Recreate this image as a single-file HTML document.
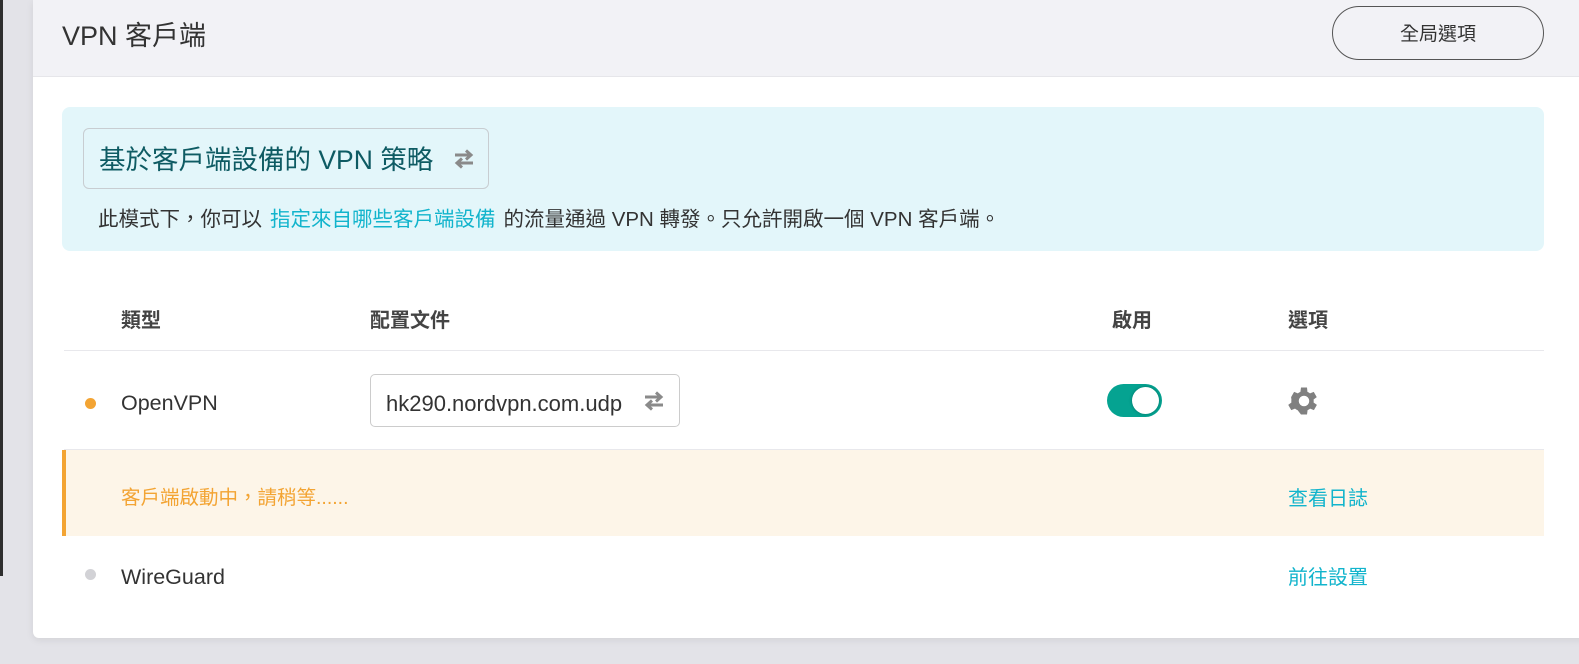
<!DOCTYPE html>
<html><head><meta charset="utf-8"><style>
*{margin:0;padding:0;box-sizing:border-box}
body{width:1579px;height:664px;overflow:hidden;background:#e3e3e8;font-family:"Liberation Sans","Noto Sans CJK TC",sans-serif;position:relative;color:#333}
.strip{position:absolute;left:0;top:0;width:3px;height:576px;background:#2e2e2e}
.card{position:absolute;left:33px;top:0;width:1560px;height:638px;background:#fff;border-radius:0 0 6px 6px;box-shadow:0 2px 8px rgba(0,0,0,.08)}
.hdr{position:absolute;left:0;top:0;right:0;height:77px;background:#f2f2f6;border-bottom:1px solid #e6e6ea}
.c{position:absolute;line-height:1;white-space:nowrap}
.title{left:29px;top:23px;font-size:27px;color:#333}
.gbtn{position:absolute;left:1299px;top:6px;width:212px;height:54px;border:1.5px solid #555;border-radius:27px;font-size:19px;line-height:55px;text-align:center;color:#333}
.info{position:absolute;left:29px;top:107px;width:1482px;height:144px;background:#e3f6fa;border-radius:8px}
.pol{position:absolute;left:21px;top:21px;width:406px;height:61px;border:1px solid #c8cdd1;border-radius:6px}
.desc{left:36px;top:103px;font-size:20.5px;color:#333}
.desc a{color:#12b4cc;margin:0 8px}
.th{top:311px;font-size:20px;font-weight:bold;color:#444}
.line{position:absolute;left:31px;width:1480px;height:1px;background:#e8e8ec}
.dot{position:absolute;width:11px;height:11px;border-radius:50%}
.sel{position:absolute;left:337px;top:374px;width:310px;height:53px;border:1px solid #ccc;border-radius:5px}
.tog{position:absolute;left:1074px;top:384px;width:55px;height:33px;background:#05a391;border-radius:17px}
.tog i{position:absolute;right:3px;top:3px;width:27px;height:27px;background:#fff;border-radius:50%;box-shadow:0 0 3px rgba(0,0,0,.3)}
.warn{position:absolute;left:29px;top:450px;width:1482px;height:86px;background:#fdf5e8;border-left:4px solid #f3a433}
.lnk{left:1255px;font-size:20px;color:#12b4cc}
</style></head><body>
<div class="strip"></div>
<div class="card">
<div class="hdr"><div class="c title">VPN 客戶端</div><div class="gbtn">全局選項</div></div>
<div class="info">
<div class="pol"><div class="c" style="left:15px;top:18px;font-size:26.5px;color:#0e5b63">基於客戶端設備的 VPN 策略</div>
<svg style="position:absolute;left:369px;top:20px" width="22" height="20" viewBox="0 0 22 20"><path d="M2 6h15M13 1.5l5 4.5-5 4.5M20 14H5M9 9.5l-5 4.5 5 4.5" fill="none" stroke="#8a8a8a" stroke-width="3"/></svg></div>
<div class="c desc">此模式下，你可以<a>指定來自哪些客戶端設備</a>的流量通過 VPN 轉發。只允許開啟一個 VPN 客戶端。</div>
</div>
<div class="c th" style="left:88px">類型</div>
<div class="c th" style="left:337px">配置文件</div>
<div class="c th" style="left:1079px">啟用</div>
<div class="c th" style="left:1255px">選項</div>
<div class="line" style="top:350px"></div>
<div class="dot" style="left:52px;top:398px;background:#f3a433"></div>
<div class="c" style="left:88px;top:393px;font-size:21.5px">OpenVPN</div>
<div class="sel"><div class="c" style="left:15px;top:18px;font-size:22px">hk290.nordvpn.com.udp</div>
<svg style="position:absolute;left:272px;top:16px" width="22" height="20" viewBox="0 0 22 20"><path d="M2 6h15M13 1.5l5 4.5-5 4.5M20 14H5M9 9.5l-5 4.5 5 4.5" fill="none" stroke="#8a8a8a" stroke-width="3"/></svg></div>
<div class="tog"><i></i></div>
<svg style="position:absolute;left:1253px;top:383px" width="36" height="36" viewBox="0 0 24 24"><path fill="#808080" d="M19.4 13a7.5 7.5 0 0 0 0-2l2.1-1.6-2-3.5-2.5 1a7.5 7.5 0 0 0-1.7-1L15 3h-4l-.4 2.9a7.5 7.5 0 0 0-1.7 1l-2.5-1-2 3.5L4.6 11a7.5 7.5 0 0 0 0 2l-2.1 1.6 2 3.5 2.5-1a7.5 7.5 0 0 0 1.7 1L11 21h4l.4-2.9a7.5 7.5 0 0 0 1.7-1l2.5 1 2-3.5zM13 15.5a3.5 3.5 0 1 1 0-7 3.5 3.5 0 0 1 0 7z" transform="translate(-1 0)"/></svg>
<div class="line" style="top:449px"></div>
<div class="warn"></div>
<div class="c" style="left:88px;top:489px;font-size:19.5px;color:#f3a433">客戶端啟動中，請稍等......</div>
<div class="c lnk" style="top:489px">查看日誌</div>
<div class="dot" style="left:52px;top:569px;background:#d2d2d6"></div>
<div class="c" style="left:88px;top:567px;font-size:21.5px">WireGuard</div>
<div class="c lnk" style="top:568px">前往設置</div>
</div>
</body></html>
